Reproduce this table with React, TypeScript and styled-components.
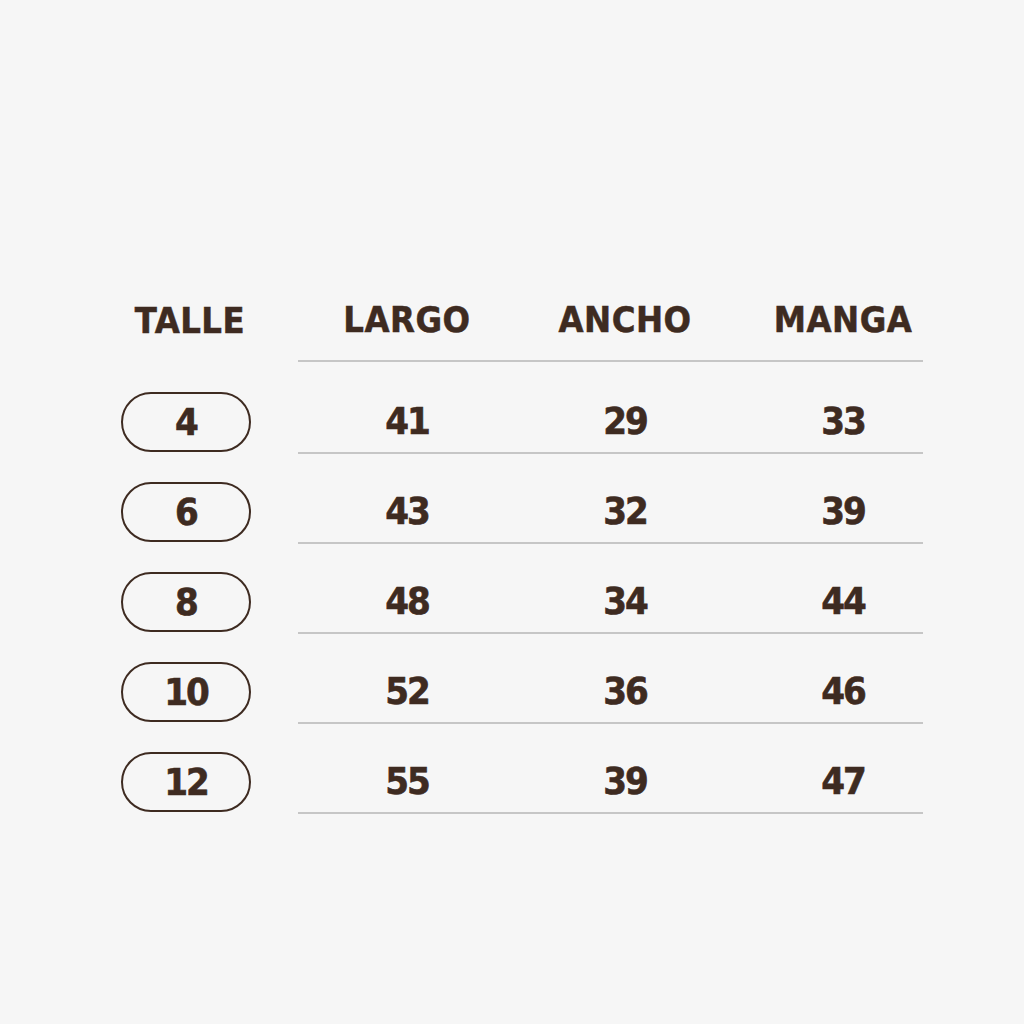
import styled, { createGlobalStyle } from 'styled-components';

const INK = '#3e2b21';
const RULE = '#c6c6c6';

const GlobalStyle = createGlobalStyle`
  html, body {
    margin: 0;
    padding: 0;
    background: #f6f6f6;
  }
  body {
    font-family: "DejaVu Sans Condensed", "DejaVu Sans", sans-serif;
    color: ${INK};
  }
`;

const Page = styled.main`
  width: 1024px;
  height: 1024px;
  box-sizing: border-box;
  padding: 280px 0 0 121px;
`;

const Table = styled.section`
  display: flex;
  flex-direction: column;
  gap: 26px;
`;

const Row = styled.div`
  display: grid;
  grid-template-columns: 130px 625px;
  column-gap: 47px;
  align-items: center;
`;

const HeaderRow = styled(Row)`
  margin-bottom: 2px;
`;

const Cells = styled.div<{ $height: number }>`
  display: grid;
  grid-template-columns: repeat(3, 218px);
  align-items: center;
  justify-items: center;
  height: ${(p) => p.$height}px;
  border-bottom: 2px solid ${RULE};
`;

const HeadLabel = styled.span`
  font-weight: 700;
  font-size: 36px;
  letter-spacing: 0.5px;
  line-height: 1;
  text-align: center;
  -webkit-text-stroke: 0.5px ${INK};
`;

const SizeHead = styled(HeadLabel)`
  padding-left: 8px;
`;

const Num = styled.span`
  font-weight: 700;
  font-size: 38px;
  letter-spacing: -2px;
  line-height: 1;
  -webkit-text-stroke: 0.6px ${INK};
`;

const Pill = styled.div`
  height: 60px;
  box-sizing: border-box;
  border: 2px solid ${INK};
  border-radius: 30px;
  display: flex;
  align-items: center;
  justify-content: center;
`;

const rows = [
  { talle: '4', largo: 41, ancho: 29, manga: 33 },
  { talle: '6', largo: 43, ancho: 32, manga: 39 },
  { talle: '8', largo: 48, ancho: 34, manga: 44 },
  { talle: '10', largo: 52, ancho: 36, manga: 46 },
  { talle: '12', largo: 55, ancho: 39, manga: 47 },
];

export default function App() {
  return (
    <Page>
      <GlobalStyle />
      <Table>
        <HeaderRow>
          <SizeHead>TALLE</SizeHead>
          <Cells $height={80}>
            <HeadLabel>LARGO</HeadLabel>
            <HeadLabel>ANCHO</HeadLabel>
            <HeadLabel>MANGA</HeadLabel>
          </Cells>
        </HeaderRow>
        {rows.map((r) => (
          <Row key={r.talle}>
            <Pill>
              <Num>{r.talle}</Num>
            </Pill>
            <Cells $height={62}>
              <Num>{r.largo}</Num>
              <Num>{r.ancho}</Num>
              <Num>{r.manga}</Num>
            </Cells>
          </Row>
        ))}
      </Table>
    </Page>
  );
}
